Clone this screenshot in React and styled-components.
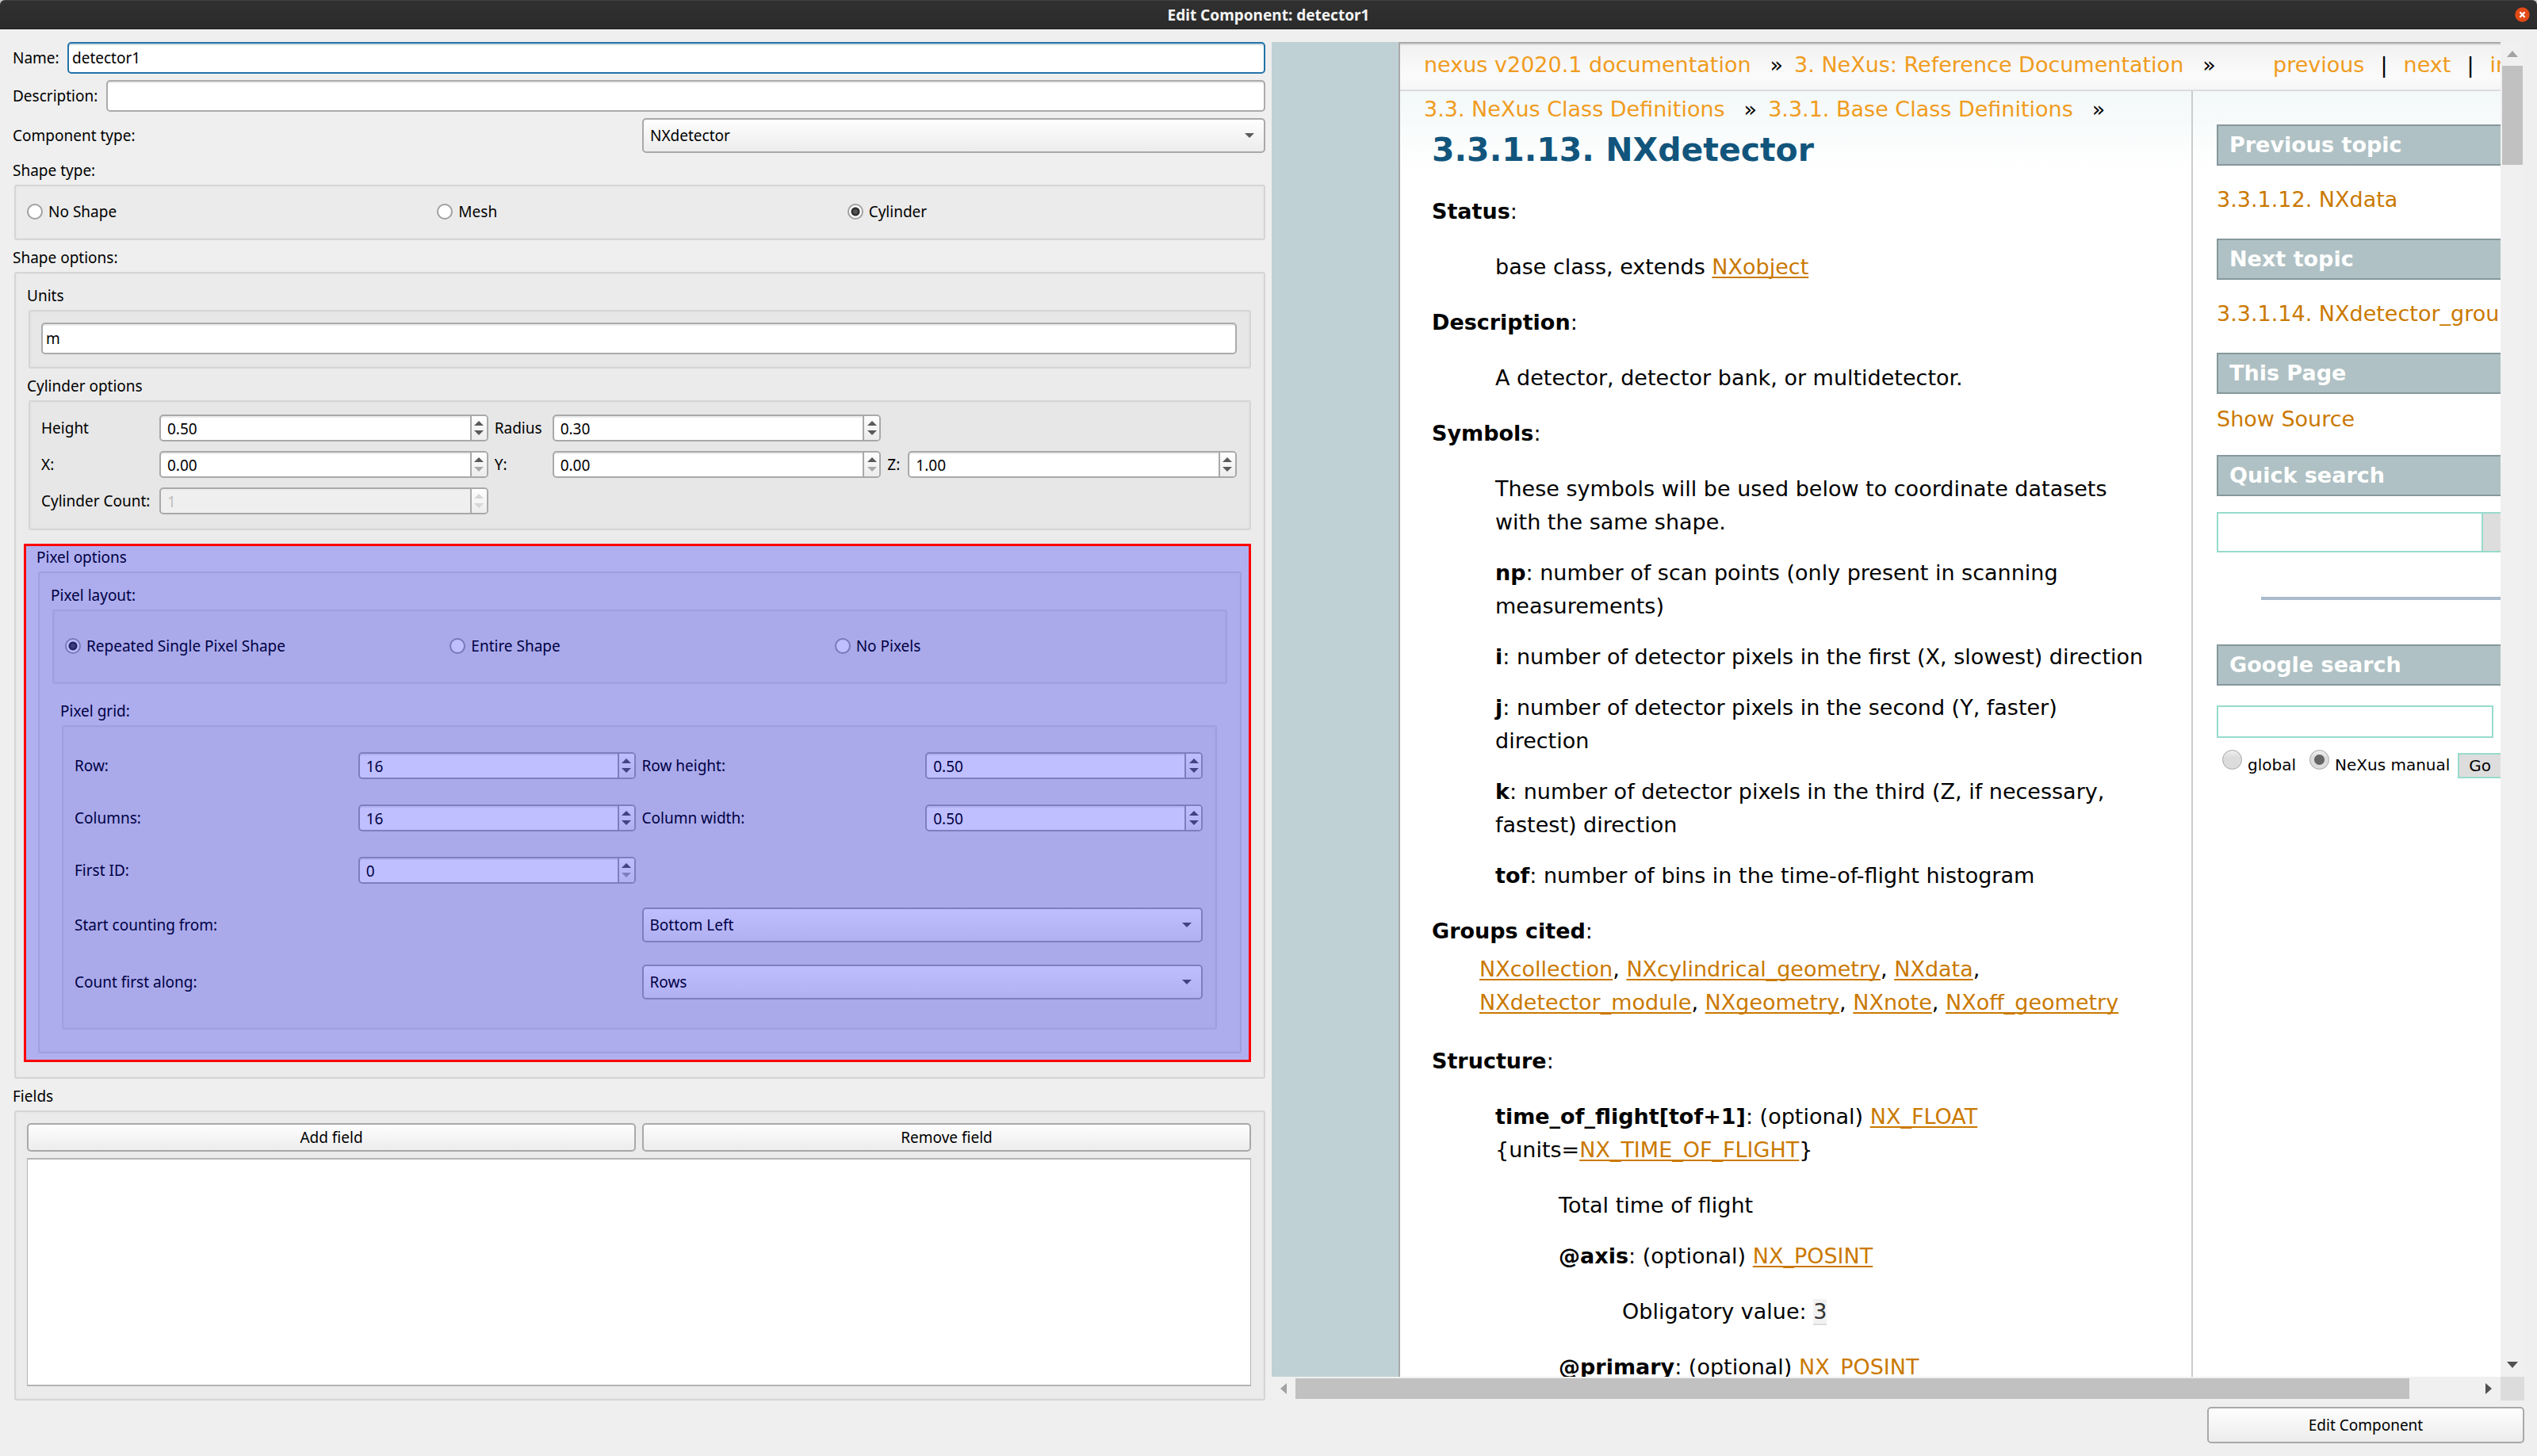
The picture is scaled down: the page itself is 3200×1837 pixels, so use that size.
import React, { useId } from "react";
import styled, { createGlobalStyle, css } from "styled-components";

const uiFont = `"Noto Sans", "Open Sans", sans-serif`;
const docFont = `"DejaVu Sans", sans-serif`;

const GlobalStyle = createGlobalStyle`
  *, *::before, *::after { box-sizing: border-box; }
  body { margin: 0; background: #c9c9c9; }
  button, input, select { font: inherit; color: inherit; margin: 0; }
  p, h1, h2, h3, ul, dl, dd { margin: 0; padding: 0; }
`;

const Window = styled.div`
  display: flex;
  flex-direction: column;
  height: 100vh;
  background: #efefef;
  border-radius: 6px 6px 0 0;
  overflow: hidden;
  color: #000;
  font: 19px/28px ${uiFont};
`;

const TitleBar = styled.header`
  display: grid;
  grid-template-columns: 1fr auto 1fr;
  align-items: center;
  height: 37px;
  padding: 0 9px;
  border-top: 1px solid #404040;
  border-bottom: 1px solid #1f1f1f;
  background: linear-gradient(#303030, #2b2b2b);
  color: #f4f4f4;
`;

const WindowTitle = styled.h1`
  grid-column: 2;
  font-size: 19px;
  line-height: 28px;
  font-weight: 700;
`;

const CloseButton = styled.button`
  justify-self: end;
  display: flex;
  padding: 0;
  border: 0;
  background: none;
`;

const Body = styled.div`
  flex: 1;
  min-height: 0;
  display: grid;
  grid-template-columns: minmax(0, 1fr) minmax(0, 1fr);
  grid-template-rows: minmax(0, 1fr) auto;
  gap: 8px;
  padding: 16px;
`;

const FormColumn = styled.form`
  display: flex;
  flex-direction: column;
  gap: 8px;
  min-height: 0;
`;

const FieldRow = styled.div`
  display: flex;
  align-items: center;
  gap: 8px;
`;

const FieldLabel = styled.label`
  flex: none;
  width: ${(p) => p.$width}px;
  white-space: nowrap;
`;

const Halves = styled.div`
  display: grid;
  grid-template-columns: 1fr 1fr;
  column-gap: 8px;
  row-gap: 28px;
  align-items: center;
  margin-top: ${(p) => p.$top || 0}px;
`;

const TextInput = styled.input`
  min-width: 0;
  width: 100%;
  height: 40px;
  padding: 0 4px;
  border: 2px solid ${(p) => (p.$active ? "#2373a8" : "#ababab")};
  border-radius: 5px;
  background: #fff;
  box-shadow: inset 0 2px 0 ${(p) => (p.$active ? "#d0dde4" : "#ececec")};
  outline: none;
`;

const SelectBox = styled.div`
  position: relative;
  display: flex;
`;

const Select = styled.select`
  appearance: none;
  width: 100%;
  height: 44px;
  padding: 0 40px 0 8px;
  border: 2px solid #a9a9a9;
  border-radius: 5px;
  background: linear-gradient(#fefefe, #ececec);
  outline: none;
`;

const SelectArrow = styled.svg`
  position: absolute;
  right: 14px;
  top: 19px;
  pointer-events: none;
`;

const Group = styled.section`
  display: flex;
  flex-direction: column;
  flex: ${(p) => (p.$grow ? "1" : "none")};
  min-height: 0;
`;

const GroupTitle = styled.h2`
  height: 32px;
  font-size: 19px;
  line-height: 28px;
  font-weight: 400;
`;

const Frame = styled.div`
  flex: 1;
  display: flex;
  flex-direction: column;
  gap: 8px;
  margin-left: 2px;
  padding: 14px 16px ${(p) => p.$bottom || 16}px 14px;
  border: 2px solid #d5d5d5;
  border-radius: 3px;
  background: rgba(0, 0, 0, 0.014);
  box-shadow: inset 0 0 0 2px rgba(0, 0, 0, 0.012);
`;

const RadioRow = styled.div`
  display: grid;
  grid-template-columns: repeat(3, 1fr);
  gap: 8px;
  height: ${(p) => p.$height}px;
`;

const RadioLabel = styled.label`
  display: flex;
  align-items: center;
  gap: 7px;
`;

const Radio = styled.input`
  appearance: none;
  flex: none;
  width: 20px;
  height: 20px;
  border: 2px solid #a0a0a0;
  border-radius: 50%;
  background: #fff;
  &:checked {
    background: radial-gradient(circle, #555 0 2px, #2e2e2e 4px 5px, #fff 6px);
  }
`;

const CylinderGrid = styled.div`
  display: grid;
  grid-template-columns: 141px 1fr 65px 1fr 18px 1fr;
  gap: 12px 8px;
  align-items: center;
  padding: 2px 0;
`;

const SpinShell = styled.div`
  display: flex;
  height: 34px;
  min-width: 0;
  border: 2px solid #a9a9a9;
  border-radius: 5px;
  overflow: hidden;
  background: ${(p) => (p.$disabled ? "#efefef" : "#fff")};
  box-shadow: inset 0 2px 0 #ececec;
`;

const SpinInput = styled.input`
  appearance: textfield;
  flex: 1;
  min-width: 0;
  padding: 2px 8px 0;
  border: 0;
  background: transparent;
  outline: none;
  &::-webkit-inner-spin-button { appearance: none; margin: 0; }
  &:disabled { color: #bebebe; }
`;

const SpinButtons = styled.div`
  display: flex;
  flex-direction: column;
  justify-content: center;
  gap: 6px;
  width: 21px;
  border-left: 2px solid #a9a9a9;
  background: linear-gradient(#fefefe, #ececec);
`;

const SpinButton = styled.button`
  display: flex;
  justify-content: center;
  padding: 0;
  border: 0;
  background: none;
  color: #5a5a5a;
  ${(p) => p.$dim && css`color: #a9a9a9;`}
  &:disabled { color: #d6d6d6; }
`;

const Highlight = styled.div`
  position: relative;
  margin: 9px 0 3px -4px;
  padding: 0 9px 8px 13px;
  border: 3px solid #f00;
  &::after {
    content: "";
    position: absolute;
    inset: 0;
    background: rgba(0, 0, 255, 0.25);
    pointer-events: none;
  }
`;

const Inset = styled.div`
  padding: 12px 13px 12px 12px;
`;

const PixelGrid = styled.div`
  display: grid;
  grid-template-columns: repeat(4, 1fr);
  gap: 32px 8px;
  align-items: center;
  padding-top: 18px;
`;

const Buttons = styled.div`
  display: grid;
  grid-template-columns: 1fr 1fr;
  gap: 8px;
`;

const PushButton = styled.button`
  height: ${(p) => p.$height || 36}px;
  padding: 0 16px;
  border: 2px solid #a9a9a9;
  border-radius: 5px;
  background: linear-gradient(#fefefe, #ececec);
`;

const FieldList = styled.div`
  flex: 1;
  min-height: 0;
  border: 2px solid #b4b4b4;
  border-width: 2px 1px;
  background: #fff;
`;

const Footer = styled.footer`
  grid-column: 2;
  display: flex;
  justify-content: flex-end;
  & > button { width: 400px; }
`;

/* documentation browser */

const Browser = styled.section`
  display: grid;
  grid-template-columns: minmax(0, 1fr) 30px;
  grid-template-rows: minmax(0, 1fr) 30px;
  min-height: 0;
`;

const Viewport = styled.div`
  display: flex;
  overflow: hidden;
  padding-left: 160px;
  background: #bfd1d4;
  font: 27px/42px ${docFont};
`;

const Page = styled.div`
  flex: 1;
  min-width: 0;
  height: max-content;
  min-height: 100%;
  border-left: 2px solid #a9a9a9;
  background: linear-gradient(#f3f8f9, #fff 100px) 0 62px no-repeat, #fff;
`;

const NavBar = styled.nav`
  display: flex;
  justify-content: space-between;
  height: 62px;
  padding: 6px 0 0 30px;
  border-top: 2px solid #a9a9a9;
  border-bottom: 2px solid #dcdcdc;
  background: linear-gradient(#dcdcdc 0 2px, #f1f1f1 2px, #fbfbfb 70%, #f6f6f6);
  white-space: nowrap;
  overflow: hidden;
`;

const Crumbs = styled.div`
  display: flex;
  gap: 14px;
  & > a { margin-right: 10px; }
`;

const NavLinks = styled.div`
  display: flex;
  gap: 20px;
  width: 287px;
`;

const NavLink = styled.a`
  color: #f09c20;
  text-decoration: none;
`;

const Columns = styled.div`
  display: flex;
`;

const Article = styled.article`
  flex: 1;
  min-width: 0;
  padding: 2px 55px 28px 30px;
`;

const DocTitle = styled.h1`
  margin: 6px 0 33px 10px;
  color: #11557c;
  font-size: 41px;
  line-height: 48px;
  font-weight: 700;
`;

const Entries = styled.dl`
  display: flex;
  flex-direction: column;
  gap: 28px;
  padding-left: ${(p) => p.$indent}px;
`;

const Details = styled.dd`
  display: flex;
  flex-direction: column;
  gap: 22px;
  padding-left: 80px;
`;

const Cited = styled.dd`
  margin: -22px 0 4px;
  padding-left: 60px;
`;

const DocLink = styled.a`
  color: #ca7900;
  text-decoration: ${(p) => (p.$plain ? "none" : "underline")};
  text-decoration-thickness: 2px;
  text-underline-offset: 3px;
  text-decoration-skip-ink: none;
`;

const Literal = styled.code`
  border-bottom: 2px solid #ddd;
  background: #f2f2f2;
  color: #333;
  font-family: ${docFont};
`;

const Sidebar = styled.aside`
  flex: none;
  width: 390px;
  overflow: hidden;
  padding: 42px 0 0 30px;
  border-left: 2px solid #ccc;
  white-space: nowrap;
`;

const SideHeading = styled.h3`
  margin: 0 -40px ${(p) => p.$after}px 0;
  padding: 0 14px;
  border: 2px solid #86989b;
  background: #afc1c4;
  color: #fff;
  font-size: 27px;
  line-height: 48px;
  font-weight: 700;
`;

const SideLink = styled.p`
  margin-bottom: ${(p) => p.$after || 28}px;
`;

const SearchRow = styled.div`
  display: flex;
  height: ${(p) => p.$height}px;
  margin-right: -40px;
`;

const SearchInput = styled.input`
  width: ${(p) => p.$width}px;
  height: 100%;
  padding: 0 8px;
  border: 2px solid #98dbcc;
  border-radius: 0;
  background: #fff;
  outline: none;
`;

const SearchButton = styled.button`
  flex: 1;
  margin-left: -2px;
  border: 2px solid #98dbcc;
  background: #ddd;
`;

const Rule = styled.hr`
  height: 4px;
  margin: 56px -40px 56px 56px;
  border: 0;
  background: #abc;
`;

const Scope = styled.div`
  display: flex;
  margin: 15px -40px 0 0;
  padding-left: 7px;
  font-size: 20px;
  line-height: 38px;
`;

const ScopeLabel = styled.label`
  display: flex;
  align-items: flex-start;
  gap: 7px;
  margin-right: ${(p) => p.$after}px;
`;

const ScopeRadio = styled.input`
  appearance: none;
  width: 25px;
  height: 25px;
  border: 1px solid #a6a6a6;
  border-radius: 50%;
  background: linear-gradient(#efefef, #dcdcdc 40%);
  &:checked {
    background: radial-gradient(circle, #666 0 6px, transparent 7px),
      linear-gradient(#efefef, #dcdcdc 40%);
  }
`;

const GoButton = styled.button`
  align-self: flex-start;
  width: 80px;
  height: 32px;
  margin-top: 4px;
  padding: 0 12px;
  border: 2px solid #98dbcc;
  background: #ddd;
  line-height: 28px;
  text-align: left;
`;

const ScrollBar = styled.div`
  display: flex;
  flex-direction: ${(p) => (p.$vertical ? "column" : "row")};
  background: #f0f0f0;
`;

const ScrollArrow = styled.div`
  display: flex;
  align-items: center;
  justify-content: center;
  width: 30px;
  height: 30px;
`;

const ScrollThumb = styled.div`
  flex: ${(p) => p.$share};
  margin: ${(p) => (p.$vertical ? "0 2px" : "2px 0")};
  background: #c1c1c1;
`;

const ScrollRest = styled.div`
  flex: ${(p) => p.$share};
`;

const ScrollCorner = styled.div`
  background: #dcdcdc;
`;

const shapes = {
  up: ["0,6 12,6 6,0", 12, 6],
  down: ["0,0 12,0 6,6", 12, 6],
  bigUp: ["0,8 14,8 7,0", 14, 8],
  bigDown: ["0,0 14,0 7,8", 14, 8],
  left: ["8,0 8,14 0,7", 8, 14],
  right: ["0,0 0,14 8,7", 8, 14],
};

function Triangle({ kind, color = "currentColor" }) {
  const [points, w, h] = shapes[kind];
  return (
    <svg width={w} height={h} viewBox={`0 0 ${w} ${h}`} aria-hidden="true">
      <polygon points={points} fill={color} />
    </svg>
  );
}

function Combo({ id, value }) {
  return (
    <SelectBox>
      <Select id={id} defaultValue={value}>
        <option>{value}</option>
      </Select>
      <SelectArrow width="12" height="6" viewBox="0 0 12 6" aria-hidden="true">
        <polygon points="0,0 12,0 6,6" fill="#5a5a5a" />
      </SelectArrow>
    </SelectBox>
  );
}

function Spin({ label, value, step = "0.01", atMin, disabled }) {
  const id = useId();
  return (
    <>
      <label htmlFor={id}>{label}</label>
      <SpinShell $disabled={disabled}>
        <SpinInput id={id} type="number" step={step} defaultValue={value} disabled={disabled} />
        <SpinButtons>
          <SpinButton type="button" aria-label={`Increase ${label}`} disabled={disabled}>
            <Triangle kind="up" />
          </SpinButton>
          <SpinButton type="button" aria-label={`Decrease ${label}`} disabled={disabled} $dim={atMin}>
            <Triangle kind="down" />
          </SpinButton>
        </SpinButtons>
      </SpinShell>
    </>
  );
}

function RadioSet({ name, options, selected, height }) {
  return (
    <RadioRow $height={height}>
      {options.map((option) => (
        <RadioLabel key={option}>
          <Radio type="radio" name={name} defaultChecked={option === selected} />
          {option}
        </RadioLabel>
      ))}
    </RadioRow>
  );
}

function ComponentForm() {
  return (
    <FormColumn>
      <FieldRow>
        <FieldLabel htmlFor="name" $width={61}>Name:</FieldLabel>
        <TextInput id="name" defaultValue="detector1" $active />
      </FieldRow>
      <FieldRow>
        <FieldLabel htmlFor="description" $width={110}>Description:</FieldLabel>
        <TextInput id="description" />
      </FieldRow>
      <Halves>
        <label htmlFor="component-type">Component type:</label>
        <Combo id="component-type" value="NXdetector" />
      </Halves>

      <Group>
        <GroupTitle>Shape type:</GroupTitle>
        <Frame>
          <RadioSet name="shape" height={36} options={["No Shape", "Mesh", "Cylinder"]} selected="Cylinder" />
        </Frame>
      </Group>

      <Group>
        <GroupTitle>Shape options:</GroupTitle>
        <Frame>
          <Group>
            <GroupTitle as="label" htmlFor="units">Units</GroupTitle>
            <Frame>
              <TextInput id="units" defaultValue="m" />
            </Frame>
          </Group>
          <Group>
            <GroupTitle>Cylinder options</GroupTitle>
            <Frame>
              <CylinderGrid>
                <Spin label="Height" value="0.50" />
                <Spin label="Radius" value="0.30" />
                <span />
                <span />
                <Spin label="X:" value="0.00" atMin />
                <Spin label="Y:" value="0.00" atMin />
                <Spin label="Z:" value="1.00" />
                <Spin label="Cylinder Count:" value="1" step="1" disabled />
              </CylinderGrid>
            </Frame>
          </Group>
          <Highlight>
            <Group>
              <GroupTitle>Pixel options</GroupTitle>
              <Frame>
                <Group>
                  <GroupTitle>Pixel layout:</GroupTitle>
                  <Frame>
                    <RadioSet
                      name="pixels"
                      height={60}
                      options={["Repeated Single Pixel Shape", "Entire Shape", "No Pixels"]}
                      selected="Repeated Single Pixel Shape"
                    />
                  </Frame>
                </Group>
                <Inset>
                  <Group>
                    <GroupTitle>Pixel grid:</GroupTitle>
                    <Frame $bottom={36}>
                      <PixelGrid>
                        <Spin label="Row:" value="16" step="1" />
                        <Spin label="Row height:" value="0.50" />
                        <Spin label="Columns:" value="16" step="1" />
                        <Spin label="Column width:" value="0.50" />
                        <Spin label="First ID:" value="0" step="1" atMin />
                      </PixelGrid>
                      <Halves $top={22}>
                        <label htmlFor="count-from">Start counting from:</label>
                        <Combo id="count-from" value="Bottom Left" />
                        <label htmlFor="count-along">Count first along:</label>
                        <Combo id="count-along" value="Rows" />
                      </Halves>
                    </Frame>
                  </Group>
                </Inset>
              </Frame>
            </Group>
          </Highlight>
        </Frame>
      </Group>

      <Group $grow>
        <GroupTitle>Fields</GroupTitle>
        <Frame>
          <Buttons>
            <PushButton type="button">Add field</PushButton>
            <PushButton type="button">Remove field</PushButton>
          </Buttons>
          <FieldList role="listbox" aria-label="Fields" />
        </Frame>
      </Group>
    </FormColumn>
  );
}

function Symbol({ name, children }) {
  return (
    <p>
      <strong>{name}</strong>: {children}
    </p>
  );
}

const Link = ({ children, plain }) => (
  <DocLink href="#" $plain={plain}>{children}</DocLink>
);

function Documentation() {
  return (
    <Viewport>
      <Page>
        <NavBar>
          <Crumbs>
            <NavLink href="#">nexus v2020.1 documentation</NavLink>»
            <NavLink href="#">3. NeXus: Reference Documentation</NavLink>»
          </Crumbs>
          <NavLinks>
            <NavLink href="#">previous</NavLink>|
            <NavLink href="#">next</NavLink>|
            <NavLink href="#">index</NavLink>
          </NavLinks>
        </NavBar>
        <Columns>
          <Article>
            <Crumbs>
              <NavLink href="#">3.3. NeXus Class Definitions</NavLink>»
              <NavLink href="#">3.3.1. Base Class Definitions</NavLink>»
            </Crumbs>
            <DocTitle>3.3.1.13. NXdetector</DocTitle>
            <Entries $indent={10}>
              <dt><strong>Status</strong>:</dt>
              <Details>
                <p>base class, extends <Link>NXobject</Link></p>
              </Details>
              <dt><strong>Description</strong>:</dt>
              <Details>
                <p>A detector, detector bank, or multidetector.</p>
              </Details>
              <dt><strong>Symbols</strong>:</dt>
              <Details>
                <p>These symbols will be used below to coordinate datasets with the same shape.</p>
                <Symbol name="np">number of scan points (only present in scanning measurements)</Symbol>
                <Symbol name="i">number of detector pixels in the first (X, slowest) direction</Symbol>
                <Symbol name="j">number of detector pixels in the second (Y, faster) direction</Symbol>
                <Symbol name="k">number of detector pixels in the third (Z, if necessary, fastest) direction</Symbol>
                <Symbol name="tof">number of bins in the time-of-flight histogram</Symbol>
              </Details>
              <dt><strong>Groups cited</strong>:</dt>
              <Cited>
                <Link>NXcollection</Link>, <Link>NXcylindrical_geometry</Link>, <Link>NXdata</Link>,{" "}
                <Link>NXdetector_module</Link>, <Link>NXgeometry</Link>, <Link>NXnote</Link>,{" "}
                <Link>NXoff_geometry</Link>
              </Cited>
              <dt><strong>Structure</strong>:</dt>
              <Details>
                <Entries $indent={0}>
                  <dt>
                    <strong>time_of_flight[tof+1]</strong>: (optional) <Link>NX_FLOAT</Link>{" "}
                    {"{units="}<Link>NX_TIME_OF_FLIGHT</Link>{"}"}
                  </dt>
                  <Details>
                    <p>Total time of flight</p>
                    <Entries $indent={0}>
                      <dt><strong>@axis</strong>: (optional) <Link>NX_POSINT</Link></dt>
                      <Details>
                        <p>Obligatory value: <Literal>3</Literal></p>
                      </Details>
                      <dt><strong>@primary</strong>: (optional) <Link>NX_POSINT</Link></dt>
                    </Entries>
                  </Details>
                </Entries>
              </Details>
            </Entries>
          </Article>
          <Sidebar>
            <SideHeading $after={22}>Previous topic</SideHeading>
            <SideLink><Link plain>3.3.1.12. NXdata</Link></SideLink>
            <SideHeading $after={22}>Next topic</SideHeading>
            <SideLink><Link plain>3.3.1.14. NXdetector_group</Link></SideLink>
            <SideHeading $after={11}>This Page</SideHeading>
            <SideLink $after={24}><Link plain>Show Source</Link></SideLink>
            <SideHeading $after={20}>Quick search</SideHeading>
            <SearchRow $height={51}>
              <SearchInput aria-label="Quick search" $width={336} />
              <SearchButton type="button" aria-label="Search" />
            </SearchRow>
            <Rule />
            <SideHeading $after={25}>Google search</SideHeading>
            <SearchRow $height={41}>
              <SearchInput aria-label="Google search" $width={349} />
            </SearchRow>
            <Scope>
              <ScopeLabel $after={17}>
                <ScopeRadio type="radio" name="scope" />
                <span>global</span>
              </ScopeLabel>
              <ScopeLabel $after={10}>
                <ScopeRadio type="radio" name="scope" defaultChecked />
                <span>NeXus manual</span>
              </ScopeLabel>
              <GoButton type="button">Go</GoButton>
            </Scope>
          </Sidebar>
        </Columns>
      </Page>
    </Viewport>
  );
}

export default function App() {
  return (
    <>
      <GlobalStyle />
      <Window>
        <TitleBar>
          <WindowTitle>Edit Component: detector1</WindowTitle>
          <CloseButton type="button" aria-label="Close">
            <svg width="19" height="19" viewBox="0 0 19 19" aria-hidden="true">
              <circle cx="9.5" cy="9.5" r="9.2" fill="#e24a17" />
              <path d="M6.4 6.2l6.2 6.6M12.6 6.2l-6.2 6.6" stroke="#fff" strokeWidth="2.2" />
            </svg>
          </CloseButton>
        </TitleBar>
        <Body>
          <ComponentForm />
          <Browser>
            <Documentation />
            <ScrollBar $vertical>
              <ScrollArrow><Triangle kind="bigUp" color="#a3a3a3" /></ScrollArrow>
              <ScrollThumb $vertical $share={1} />
              <ScrollRest $share={12} />
              <ScrollArrow><Triangle kind="bigDown" color="#505050" /></ScrollArrow>
            </ScrollBar>
            <ScrollBar>
              <ScrollArrow><Triangle kind="left" color="#a3a3a3" /></ScrollArrow>
              <ScrollThumb $share={33} />
              <ScrollRest $share={2} />
              <ScrollArrow><Triangle kind="right" color="#505050" /></ScrollArrow>
            </ScrollBar>
            <ScrollCorner />
          </Browser>
          <Footer>
            <PushButton type="button" $height={46}>Edit Component</PushButton>
          </Footer>
        </Body>
      </Window>
    </>
  );
}
